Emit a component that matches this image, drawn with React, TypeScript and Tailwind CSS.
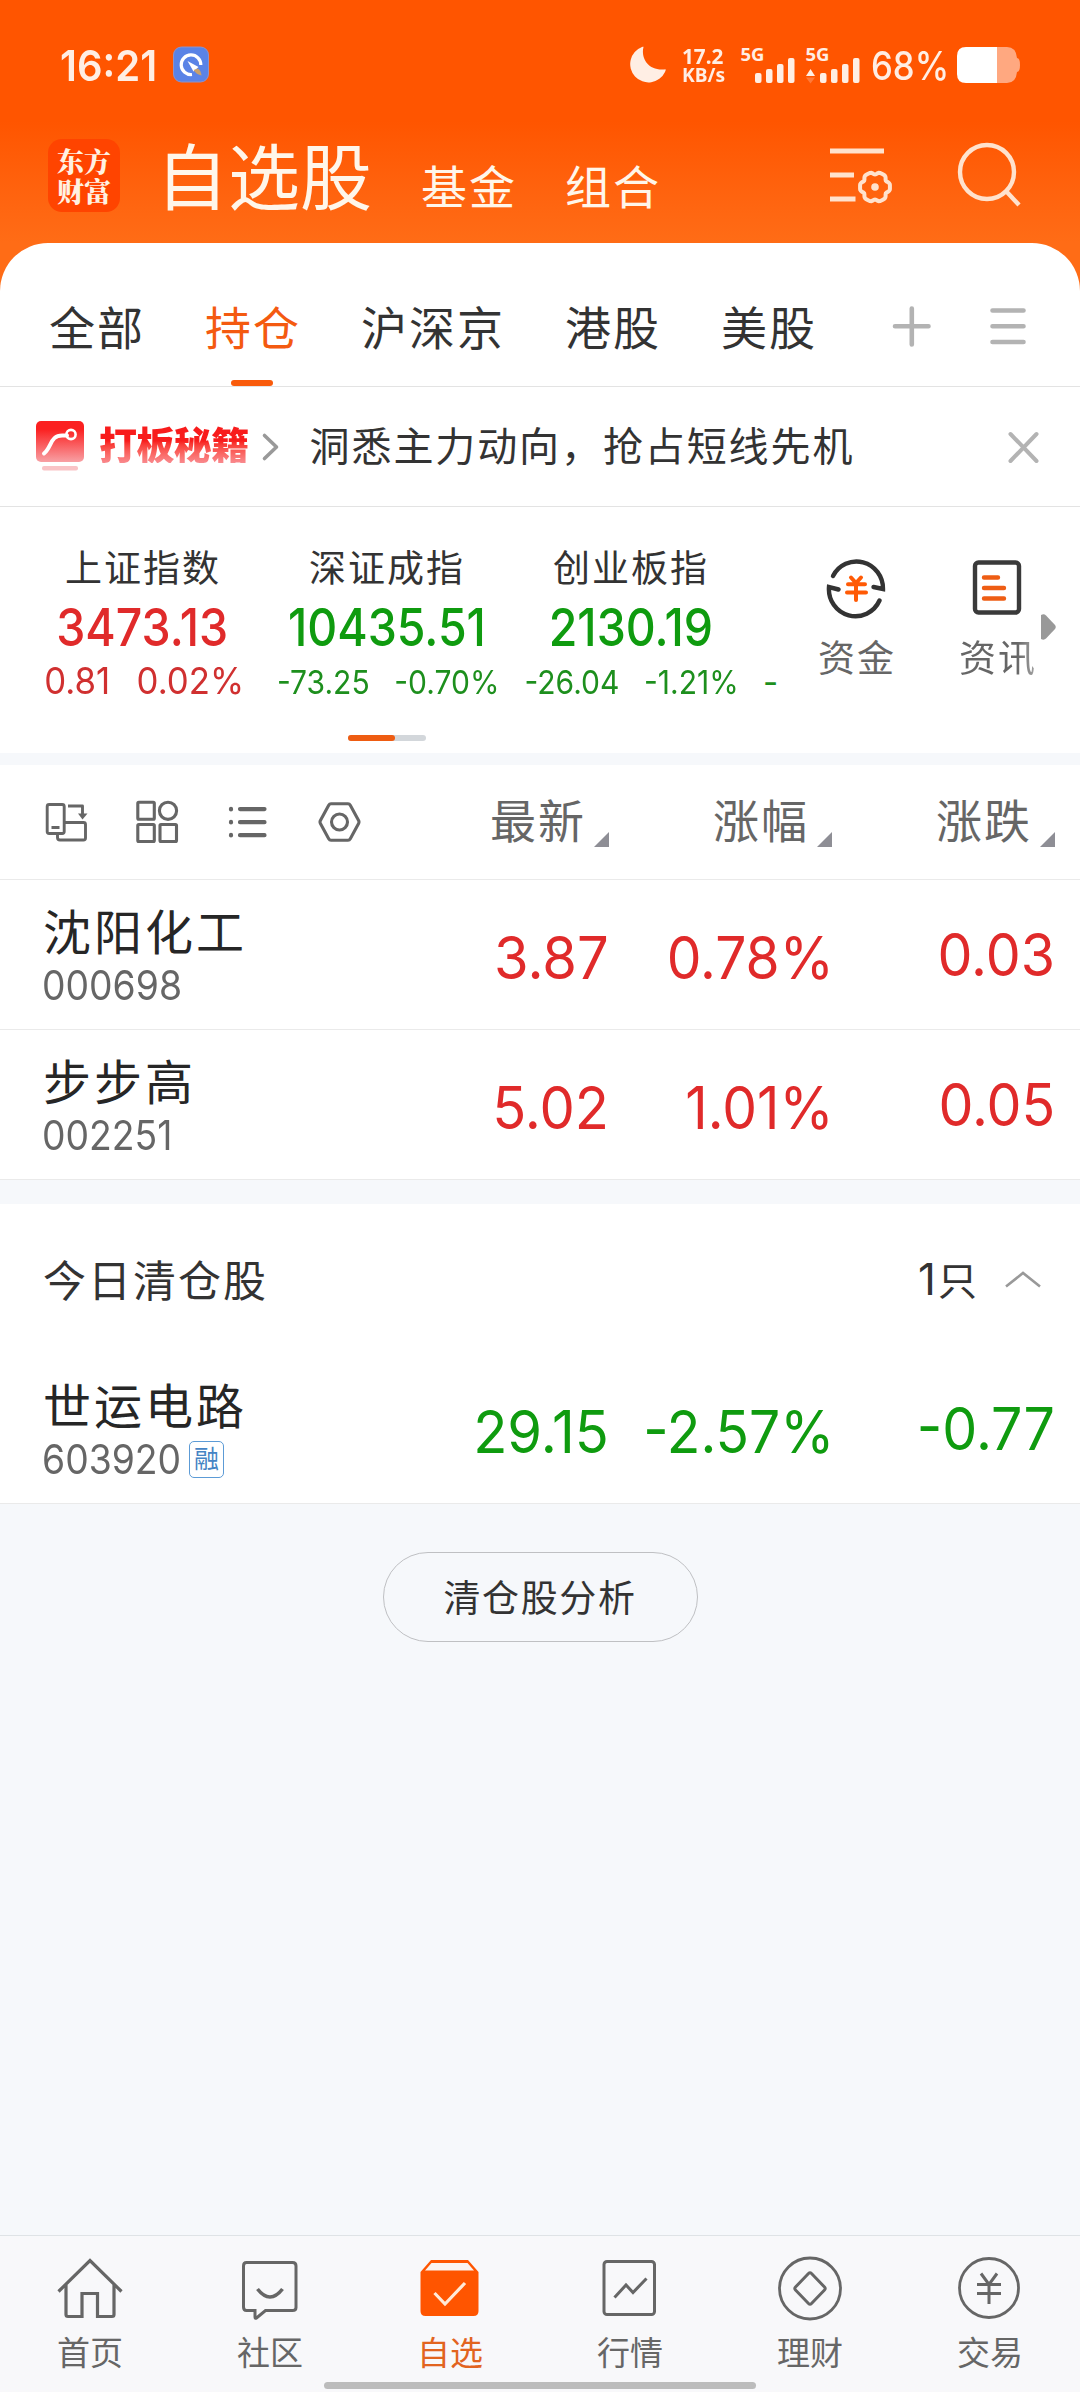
import React from "react";

const UP = "text-[#e02a2a]";
const DOWN = "text-[#0f9b0f]";

function SignalBars() {
  return (
    <g fill="currentColor">
      <rect x="14" y="27" width="6.500" height="10" rx="2" />
      <rect x="25" y="23" width="6.500" height="14" rx="2" />
      <rect x="36" y="18" width="6.500" height="19" rx="2" />
      <rect x="47" y="12" width="6.500" height="25" rx="2" />
    </g>
  );
}

function StatusBar() {
  return (
    <div className="flex h-[130px] items-start pt-[46px] text-[#ffeee4]">
      <div className="flex h-[38px] w-[172px] items-center pl-[60px]">
        <span className="origin-left scale-x-[0.93] text-[43px] font-semibold leading-none whitespace-nowrap">16:21</span>
      </div>
      <svg className="ml-[1px] h-[37px] w-[36px]" viewBox="0 0 36 37">
        <rect x="0.5" y="1" width="35" height="35" rx="8" fill="#5a83e6" stroke="#8f93c9" />
        <path d="M19 28.500a9.800 9.800 0 1 1 8.800-9.500" fill="none" stroke="#fff" strokeWidth="3.200" />
        <path d="M14.500 15l11 6-5 4.500z" fill="#fff" />
        <path d="M20.500 24l4.500-1.500q3 2 3.500 7q-5-1-8-5.500z" fill="#c9a06a" />
      </svg>
      <svg className="ml-[420px] h-[37px] w-[37px]" viewBox="0 0 37 37">
        <path d="M14.500 1C12 10 17 25 35.500 23.500C37 22.500 37 24 36 26A18.300 18.300 0 1 1 13 1C14 .8 14.800 .5 14.500 1z" fill="currentColor" />
      </svg>
      <div className="-mt-[1px] ml-[16px] flex w-[46px] flex-col font-['Noto_Sans'] font-bold leading-[20px]">
        <span className="origin-left scale-x-[0.94] text-[22px]">17.2</span>
        <span className="origin-left scale-x-[0.96] text-[20px]">KB/s</span>
      </div>
      <svg className="ml-[13px] h-[38px] w-[58px] overflow-visible" viewBox="0 0 58 38">
        <text x="-0.5" y="15" fontSize="18.500" fontWeight="700" fontFamily="Noto Sans" fill="currentColor">5G</text>
        <SignalBars />
      </svg>
      <svg className="ml-[7px] h-[38px] w-[58px] overflow-visible" viewBox="0 0 58 38">
        <text x="-0.5" y="15" fontSize="18.500" fontWeight="700" fontFamily="Noto Sans" fill="currentColor">5G</text>
        <path d="M0 30l4.500-7 4.500 7z" fill="currentColor" />
        <path d="M0 31.500l4.500 6 4.500-6z" fill="#ff7a3a" />
        <SignalBars />
      </svg>
      <div className="ml-[7px] flex h-[38px] w-[80px] items-center">
        <span className="origin-left scale-x-[0.89] text-[39px] font-medium leading-none">68%</span>
      </div>
      <svg className="ml-[6px] h-[38px] w-[64px]" viewBox="0 0 64 38">
        <path d="M40 1h10q9 0 10 11q3 0 3 7t-3 7q-1 11-10 11h-10z" fill="#ffa880" />
        <path d="M9 1h31v36h-31q-9 0-9-9v-18q0-9 9-9z" fill="#fff" />
      </svg>
    </div>
  );
}

/** Closed outline of a soft six-lobed gear. */
function gearPath(cx: number, cy: number) {
  const points = Array.from({ length: 72 }, (_, i) => {
    const a = (i * Math.PI) / 36;
    const r = 14.2 + 1.2 * Math.cos(6 * a) - 0.5 * Math.cos(12 * a);
    return `${(cx + r * Math.cos(a)).toFixed(2)} ${(cy + r * Math.sin(a)).toFixed(2)}`;
  });
  return `M${points.join("L")}Z`;
}

function Header() {
  return (
    <header className="h-[243px] bg-linear-to-b from-[#ff5500] from-[50%] to-[#ff6c16]">
      <StatusBar />
      <div className="flex h-[113px] items-start text-[#fff6ea]">
        <div className="mt-[9px] ml-[48px] flex h-[73px] w-[72px] flex-col items-center justify-center rounded-[14px] bg-[#ff4400] font-['Noto_Serif_CJK_SC','Noto_Sans_CJK_SC',serif] text-[27px] font-black leading-[30px] text-[#fff1e2]">
          <span>东方</span>
          <span>财富</span>
        </div>
        <h1 className="mt-[12px] ml-[36px] text-[72px] font-normal leading-[72px]">自选股</h1>
        <span className="mt-[33px] ml-[49px] text-[46px] leading-[48px] tracking-[2px]">基金</span>
        <span className="mt-[33px] ml-[48px] text-[46px] leading-[48px] tracking-[2px]">组合</span>
        <svg className="mt-[16px] ml-[169px] h-[64px] w-[64px]" viewBox="0 0 64 64" fill="none" stroke="#ffe2cd" strokeWidth="5">
          <path d="M0 5h54M0 29h24M0 53h25.500" />
          <path d={gearPath(45, 41)} strokeWidth="4" />
          <circle cx="45" cy="41" r="3.800" fill="#ffe2cd" stroke="none" />
        </svg>
        <svg className="mt-[12px] ml-[63px] h-[66px] w-[66px]" viewBox="0 0 66 66" fill="none" stroke="#ffe2cd" strokeWidth="4.400">
          <circle cx="30" cy="30" r="27" />
          <path d="M48.500 48.500L62 63" />
        </svg>
      </div>
    </header>
  );
}

function Tabs() {
  const tabs = ["全部", "持仓", "沪深京", "港股", "美股"];
  return (
    <nav className="flex h-[144px] items-start gap-[60px] rounded-t-[48px] border-b border-[#e3e3e3] bg-white pl-[49px] text-[46px] leading-[48px] tracking-[2px] text-[#333]">
      {tabs.map((t) =>
        t === "持仓" ? (
          <div key={t} className="flex h-[143px] flex-col items-center justify-between pt-[61px] text-[#f45a10]">
            <span>{t}</span>
            <span className="mr-[2px] h-[6px] w-[42px] rounded-full bg-[#f95b0b]" />
          </div>
        ) : (
          <span key={t} className="mt-[61px]">{t}</span>
        )
      )}
      <svg className="mt-[62px] ml-[14px] h-[42px] w-[42px]" viewBox="0 0 42 42" stroke="#b3b3b3" strokeWidth="4.600" strokeLinecap="round">
        <path d="M4 21.300h33.500M20.800 3.500v36" />
      </svg>
      <svg className="mt-[62px] -ml-[4px] h-[42px] w-[38px]" viewBox="0 0 38 42" stroke="#b3b3b3" strokeWidth="4.600" strokeLinecap="round">
        <path d="M3.500 5.500h31M3.500 21.300h31M3.500 37h31" />
      </svg>
    </nav>
  );
}

function Promo() {
  return (
    <div className="flex h-[120px] items-start border-b border-[#e3e3e3]">
      <svg className="mt-[33px] ml-[36px] h-[52px] w-[48px]" viewBox="0 0 48 52" fill="none">
        <defs>
          <linearGradient id="promo" x1="0" y1="0" x2="0" y2="1">
            <stop offset="0.200" stopColor="#fb2020" />
            <stop offset="1" stopColor="#f8a0a4" />
          </linearGradient>
        </defs>
        <rect y="1" width="48" height="41" rx="5" fill="url(#promo)" />
        <path d="M8 33.500C16 27 14 15 27 15.500h4" stroke="#fff" strokeWidth="4" strokeLinecap="round" />
        <circle cx="35" cy="14.500" r="4.600" stroke="#fff" strokeWidth="2.600" />
        <rect x="6" y="46" width="36" height="4.500" rx="2" fill="#f9c3c6" />
      </svg>
      <span className="mt-[36px] ml-[15px] bg-linear-to-b from-[#f81c1c] from-[45%] to-[#f98a8e] bg-clip-text font-['Noto_Sans_CJK_SC',sans-serif] text-[38px] font-black leading-[40px] tracking-[-0.6px] text-transparent">打板秘籍</span>
      <svg className="mt-[44px] ml-[12px] h-[32px] w-[20px]" viewBox="0 0 20 32" fill="none" stroke="#999" strokeWidth="3.600" strokeLinecap="round" strokeLinejoin="round">
        <path d="M3.500 4.500L15.500 16L3.500 27.500" />
      </svg>
      <span className="mt-[36px] ml-[29px] w-[678px] text-[40px] leading-[48px] tracking-[1.9px] text-[#333]">洞悉主力动向，抢占短线先机</span>
      <svg className="mt-[43px] ml-[18px] h-[34px] w-[34px]" viewBox="0 0 34 34" stroke="#b3b3b3" strokeWidth="4" strokeLinecap="round">
        <path d="M4.500 4l26 27M30.500 4l-26 27" />
      </svg>
    </div>
  );
}

const indices = [
  { name: "上证指数", value: "3473.13", diff: "0.81", pct: "0.02%", up: true },
  { name: "深证成指", value: "10435.51", diff: "-73.25", pct: "-0.70%", up: false },
  { name: "创业板指", value: "2130.19", diff: "-26.04", pct: "-1.21%", up: false },
];

function Indices() {
  return (
    <section className="h-[246px]">
      <div className="flex h-[228px]">
        <div className="flex w-[790px] overflow-hidden pl-[21px]">
          {indices.map((i) => (
            <div key={i.name} className="flex w-[244px] shrink-0 flex-col items-center pt-[40px]">
              <span className="h-[44px] text-[37px] leading-[44px] tracking-[2px] text-[#333]">{i.name}</span>
              <span className={`mt-[6px] flex h-[60px] scale-x-[0.885] items-center pr-[1px] text-[52.500px] leading-none font-medium ${i.up ? UP : DOWN}`}>{i.value}</span>
              <div className={`mt-[7px] flex h-[34px] items-baseline justify-center whitespace-pre ${i.up ? "scale-x-[0.94] gap-[28px] pl-[3px] text-[37px] leading-[34px] text-[#d03030]" : "scale-x-[0.91] gap-[27px] pt-[1px] pl-[2px] text-[33px] leading-[34px] text-[#1d8f1d]"}`}>
                <span>{i.diff}</span>
                <span>{i.pct}</span>
              </div>
            </div>
          ))}
          <span className="mt-[158px] ml-[10px] shrink-0 text-[33px] leading-[34px] text-[#1d8f1d]">-</span>
        </div>
        <div className="flex w-[132px] flex-col items-center pt-[49px]">
          <svg className="h-[64px] w-[64px]" viewBox="0 0 64 64" fill="none" strokeLinecap="round">
            <g stroke="#333" strokeWidth="4.400">
              <path d="M9 20A26.500 27 0 0 1 59 33L49.500 31" />
              <path d="M55.500 44.500A26.500 27 0 0 1 5 31L14.500 33.500" />
            </g>
            <path d="M27 21.500l5 5.500 5-5.500M24 28.300h17M23 36.500h19M32 28v16" stroke="#ff5a05" strokeWidth="4" />
          </svg>
          <span className="mt-[17px] pl-[2px] text-[37px] leading-[44px] tracking-[2px] text-[#666]">资金</span>
        </div>
        <div className="ml-[14px] flex w-[122px] flex-col items-center pt-[49px]">
          <svg className="h-[64px] w-[64px]" viewBox="0 0 64 64" fill="none" strokeLinecap="round">
            <rect x="10" y="6.500" width="44" height="50" rx="3.500" stroke="#3a3a3a" strokeWidth="4.400" />
            <path d="M19 21.500h14M19 32h20M19 42.500h20" stroke="#ee5d14" strokeWidth="4.400" />
          </svg>
          <span className="mt-[17px] bg-linear-to-r from-[#666] from-[75%] to-[#aaa] bg-clip-text pl-[2px] text-[37px] leading-[44px] tracking-[2px] text-transparent">资讯</span>
        </div>
        <svg className="mt-[107px] -ml-[17px] h-[26px] w-[16px]" viewBox="0 0 16 26">
          <path d="M0 1Q3-.5 5 1.500L14 11Q15.500 13 14 15L5 24.500Q3 26.500 0 25z" fill="#999" />
        </svg>
      </div>
      <div className="ml-[348px] flex h-[6px] w-[78px] rounded-full bg-[#d3d7db]">
        <span className="w-[47px] rounded-full bg-[#ee5c12]" />
      </div>
    </section>
  );
}

function SortHead({ label }: { label: string }) {
  return (
    <div className="flex w-[223px] items-start justify-end text-[46px] leading-[48px] tracking-[2px] text-[#666]">
      <span className="mt-[32px]">{label}</span>
      <svg className="mt-[67px] ml-[8px] h-[15px] w-[15px]" viewBox="0 0 15 15">
        <path d="M15 0v15H0z" fill="#8e8e95" />
      </svg>
    </div>
  );
}

function Toolbar() {
  return (
    <div className="flex h-[115px] items-start border-b border-[#eaeaea]">
      <div className="flex w-[386px] gap-[47px] pt-[35px] pl-[44px]">
        <svg className="h-[44px] w-[44px]" viewBox="0 0 44 44" fill="none" stroke="#666" strokeWidth="2.900" strokeLinejoin="round">
          <rect x="3.200" y="4.500" width="17" height="29" rx="2" />
          <path d="M7.500 27.500h8M24 6h14.500v9M21 22.500h18.500q2 0 2 2v13.500q0 2-2 2h-23.500q-2.500 0-2.500-2.500v-3" />
          <path d="M34 13.500h9.500l-5 6z" fill="#666" stroke="none" />
        </svg>
        <svg className="h-[44px] w-[44px]" viewBox="0 0 44 44" fill="none" stroke="#666" strokeWidth="3.100">
          <rect x="2.800" y="2.300" width="16.500" height="17" rx="1" />
          <circle cx="33" cy="10.800" r="8.600" />
          <rect x="2.800" y="24.500" width="16.500" height="17" rx="1" />
          <rect x="25" y="24.500" width="16.500" height="17" rx="1" />
        </svg>
        <svg className="h-[44px] w-[44px]" viewBox="0 0 44 44" fill="none" stroke="#666" strokeWidth="4.200" strokeLinecap="round">
          <path d="M5 8.800v.6M5 21.900v.6M5 34.900v.6M14 9.100h24.500M14 22.200h24.500M14 35.200h24.500" />
        </svg>
        <svg className="h-[44px] w-[44px]" viewBox="0 0 44 44" fill="none" stroke="#666" strokeWidth="3.100" strokeLinejoin="round">
          <path d="M14 3.800h17q1.500 0 2.300 1.400l8.300 15.300q.8 1.500 0 3l-8.300 15.300q-.8 1.400-2.300 1.400h-17q-1.500 0-2.300-1.400l-8.300-15.300q-.8-1.500 0-3l8.300-15.300q.8-1.400 2.300-1.400z" />
          <circle cx="22.500" cy="22" r="8" />
        </svg>
      </div>
      <SortHead label="最新" />
      <SortHead label="涨幅" />
      <SortHead label="涨跌" />
    </div>
  );
}

type Stock = { name: string; code: string; price: string; pct: string; diff: string; up: boolean; tag?: string };

function StockRow({ s }: { s: Stock }) {
  return (
    <div className="flex h-[150px] items-start border-b border-[#eaeaea]">
      <div className="w-[384px] shrink-0 pt-[28px] pl-[43px]">
        <div className="text-[48px] leading-[50px] tracking-[3px] text-[#262626]">{s.name}</div>
        <div className="-ml-[1px] flex h-[54px] items-center">
          <span className="origin-left scale-x-[0.91] text-[41px] leading-none text-[#666]">{s.code}</span>
          {s.tag && (
            <span className="-ml-[6px] flex h-[37px] w-[35px] items-center justify-center rounded-[5px] border border-[#5c9bd6] text-[25px] leading-none text-[#4584c4]">{s.tag}</span>
          )}
        </div>
      </div>
      <div className={`flex text-[59px] leading-[60px] whitespace-nowrap ${s.up ? UP : DOWN}`}>
        <div className="flex w-[225px] justify-end pt-[48px]"><span className="origin-right scale-x-[0.95]">{s.price}</span></div>
        <div className="flex w-[225px] justify-end pt-[48px]"><span className="origin-right scale-x-[0.935]">{s.pct}</span></div>
        <div className="flex w-[221px] justify-end pt-[45px]"><span className="origin-right scale-x-[0.94]">{s.diff}</span></div>
      </div>
    </div>
  );
}

function NavItem({ label, active, children }: { label: string; active?: boolean; children: React.ReactNode }) {
  return (
    <div className={`flex w-[180px] flex-col items-center pt-[19px] ${active ? "text-[#e2641f]" : "text-[#666]"}`}>
      <svg className="h-[66px] w-[66px]" viewBox="0 0 66 66" fill="none" stroke="currentColor" strokeWidth="3">
        {children}
      </svg>
      <span className="mt-[12px] text-[33px] leading-[40px]">{label}</span>
    </div>
  );
}

function BottomNav() {
  return (
    <footer className="flex h-[157px] flex-col border-t border-[#dfe3e6] bg-[#f8f8fa]">
      <div className="flex h-[146px]">
        <NavItem label="首页">
          <path d="M1.500 36.500L33 5.500L64.500 36.500M9 30v29.500q0 2 2 2h14V38.500h15.500V61.500h14.500q2 0 2-2V30" strokeWidth="3.200" />
        </NavItem>
        <NavItem label="社区">
          <path d="M8 7.500h46q3.500 0 3.500 3.500v41.500q0 3-3.500 3h-27l-9 7.500q-1.500 1-1.500-1v-6.500h-8.500q-3 0-3-3.500v-41q0-3.500 3-3.500z" transform="translate(1.500)" />
          <path d="M20.500 34q12.500 16 25 0" strokeWidth="3.600" />
        </NavItem>
        <NavItem label="自选" active>
          <path d="M14 5h37l10.500 12v39q0 5-5 5h-48q-5 0-5-5v-39z" fill="#ff5500" stroke="none" />
          <path d="M14.500 8h36l6.500 7.500h-49z" fill="#fbf3ef" stroke="none" />
          <path d="M17.500 38l10.500 11L48 28" stroke="#ffead8" strokeWidth="3.200" />
        </NavItem>
        <NavItem label="行情">
          <rect x="7" y="6.500" width="50.500" height="53" rx="3" />
          <path d="M17.500 42.500L29 30L36 37.500L49.500 23.500" />
        </NavItem>
        <NavItem label="理财">
          <circle cx="33" cy="33.500" r="30.500" strokeWidth="2.800" />
          <path d="M31.500 18.500q1.500-1.500 3 0l13 13.500q1.500 1.500 0 3l-13 13.500q-1.500 1.500-3 0l-13-13.500q-1.500-1.500 0-3z" />
        </NavItem>
        <NavItem label="交易">
          <circle cx="32" cy="33" r="29.500" strokeWidth="2.800" />
          <path d="M24 18.500l8 11 8-11M20 29.500h24M20 38.500h24M32 29v20" />
        </NavItem>
      </div>
      <div className="mx-auto h-[7px] w-[432px] rounded-full bg-[#bcbcbc]" />
    </footer>
  );
}

export default function App() {
  return (
    <div className="flex h-[2392px] w-[1080px] flex-col overflow-hidden bg-[#f6f8fb] font-[Inter,'Noto_Sans_CJK_SC',sans-serif]">
      <Header />
      <div className="bg-[#ff6c16]">
        <Tabs />
      </div>
      <main className="flex-1">
        <div className="bg-white">
          <Promo />
          <Indices />
        </div>
        <div className="mt-[12px] bg-white">
          <Toolbar />
          <StockRow s={{ name: "沈阳化工", code: "000698", price: "3.87", pct: "0.78%", diff: "0.03", up: true }} />
          <StockRow s={{ name: "步步高", code: "002251", price: "5.02", pct: "1.01%", diff: "0.05", up: true }} />
        </div>
        <div className="mt-[24px] bg-white">
          <div className="flex h-[150px] items-center pl-[43px] text-[#333]">
            <span className="pt-[3px] text-[43px] leading-[50px] tracking-[2px]">今日清仓股</span>
            <span className="ml-auto flex items-baseline gap-[2px] pt-[2px] text-[39px] leading-[50px]">
              <span className="text-[44px]">1</span>只
            </span>
            <svg className="mr-[38px] ml-[27px] h-[20px] w-[38px]" viewBox="0 0 38 20" fill="none" stroke="#999" strokeWidth="2.600">
              <path d="M2 17.500L19 4L36 17.500" />
            </svg>
          </div>
          <StockRow s={{ name: "世运电路", code: "603920", price: "29.15", pct: "-2.57%", diff: "-0.77", up: false, tag: "融" }} />
        </div>
        <button className="mx-auto mt-[48px] flex h-[90px] w-[315px] items-center justify-center rounded-full border border-[#bfc0c3] pt-[3px] text-[37px] tracking-[1.600px] text-[#333]">清仓股分析</button>
      </main>
      <BottomNav />
    </div>
  );
}
